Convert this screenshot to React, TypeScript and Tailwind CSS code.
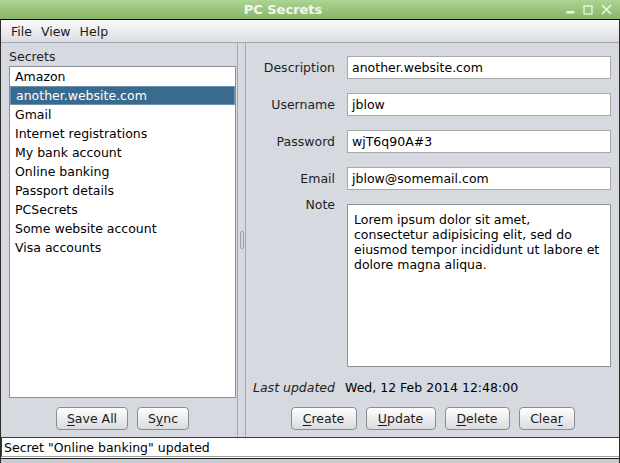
import React from "react";

const secrets = [
    "Amazon",
    "another.website.com",
    "Gmail",
    "Internet registrations",
    "My bank account",
    "Online banking",
    "Passport details",
    "PCSecrets",
    "Some website account",
    "Visa accounts",
];

const noteLines = [
    "Lorem ipsum dolor sit amet,",
    "consectetur adipisicing elit, sed do",
    "eiusmod tempor incididunt ut labore et",
    "dolore magna aliqua.",
];

// Swing style push button, one letter underlined as the mnemonic
function Btn({ label, mnemonic, width }: { label: string; mnemonic: number; width: string }) {
    return (
        <button
            className={`${width} h-[23px] rounded-[4px] border border-[#8a8d93] bg-linear-to-b from-white to-[#dadbe0] text-[12.5px] leading-[15px] text-[#1a1a1a] flex items-center justify-center`}
        >
            <span>
                {label.slice(0, mnemonic)}
                <span className="underline underline-offset-2">{label[mnemonic]}</span>
                {label.slice(mnemonic + 1)}
            </span>
        </button>
    );
}

function Field({ label, value }: { label: string; value: string }) {
    return (
        <div className="flex items-center h-[23px]">
            <div className="w-[89px] text-right text-[#1e1e1e]">{label}</div>
            <div className="ml-[12px] flex-1 h-[23px] border border-[#a6a8ac] bg-white pl-[4px] flex items-center text-black">
                {value}
            </div>
        </div>
    );
}

export default function App() {
    return (
        <div className="w-[620px] h-[463px] flex flex-col overflow-hidden bg-[#d6d9df] font-['DejaVu_Sans',sans-serif] text-[12.5px] leading-[15px]">
            {/* Title bar */}
            <div className="h-[20px] shrink-0 flex items-center bg-linear-to-b from-[#add493] to-[#88b667] border-b border-black">
                <div className="w-[566px] text-center font-bold text-[13px] text-[#f3f7ef]">PC Secrets</div>
                <div className="flex items-center gap-[8px] text-[#eef5e8]">
                    <svg width="9" height="9" viewBox="0 0 9 9">
                        <rect x="0.5" y="6" width="8" height="2.5" fill="#eef5e8" />
                    </svg>
                    <svg width="10" height="10" viewBox="0 0 10 10">
                        <rect x="1" y="1" width="8" height="8" fill="none" stroke="#eef5e8" strokeWidth="1.3" />
                    </svg>
                    <svg width="11" height="11" viewBox="0 0 11 11">
                        <path d="M1 1 L10 10 M10 1 L1 10" stroke="#eef5e8" strokeWidth="1.6" />
                    </svg>
                </div>
            </div>

            <div className="flex-1 flex flex-col border-x border-[#2a2a2a]">
                {/* Menu bar */}
                <div className="h-[23px] shrink-0 flex items-center gap-[9px] pl-[10px] bg-linear-to-b from-[#fbfbfc] to-[#dcdde3] border-b border-[#a4a7ad] text-[#1a1a1a]">
                    <span>File</span>
                    <span>View</span>
                    <span>Help</span>
                </div>

                {/* Body */}
                <div className="flex-1 flex">
                    {/* Secrets list */}
                    <div className="w-[236px] flex flex-col pt-[6px] pl-[8px] pr-[1px]">
                        <div className="h-[15px] text-[#1e1e1e]">Secrets</div>
                        <div className="mt-[2px] flex-1 border border-[#8b8f96] bg-white">
                            {secrets.map((s) => (
                                <div
                                    key={s}
                                    className={
                                        s === "another.website.com"
                                            ? "h-[19px] pl-[5px] flex items-center bg-[#3a6a8e] text-white border border-[#6e92ad]"
                                            : "h-[19px] pl-[5px] flex items-center text-black"
                                    }
                                >
                                    {s}
                                </div>
                            ))}
                        </div>
                        <div className="mt-[9px] mb-[7px] flex justify-center gap-[9px]">
                            <Btn label="Save All" mnemonic={0} width="w-[72px]" />
                            <Btn label="Sync" mnemonic={1} width="w-[52px]" />
                        </div>
                    </div>

                    {/* Splitter */}
                    <div className="w-[9px] flex items-center justify-center border-x border-[#a3a6ac]">
                        <div className="w-[4px] h-[18px] rounded-[2px] border border-[#9a9da3]" />
                    </div>

                    {/* Detail form */}
                    <div className="flex-1 flex flex-col pt-[13px] pr-[8px]">
                        <Field label="Description" value="another.website.com" />
                        <div className="mt-[14px]">
                            <Field label="Username" value="jblow" />
                        </div>
                        <div className="mt-[14px]">
                            <Field label="Password" value="wjT6q90A#3" />
                        </div>
                        <div className="mt-[14px]">
                            <Field label="Email" value="jblow@somemail.com" />
                        </div>
                        <div className="mt-[14px] flex-1 flex">
                            <div className="w-[89px] text-right text-[#1e1e1e] mt-[-7px]">Note</div>
                            <div className="ml-[12px] flex-1 border border-[#8f9298] bg-white pt-[7px] pl-[6px] text-black">
                                {noteLines.map((l) => (
                                    <div key={l}>{l}</div>
                                ))}
                            </div>
                        </div>
                        <div className="mt-[13px] h-[15px] flex">
                            <div className="w-[89px] text-right italic text-[#1e1e1e]">Last updated</div>
                            <div className="ml-[10px] text-black">Wed, 12 Feb 2014 12:48:00</div>
                        </div>
                        <div className="mt-[12px] mb-[7px] flex justify-center gap-[9px] pl-[8px]">
                            <Btn label="Create" mnemonic={0} width="w-[66px]" />
                            <Btn label="Update" mnemonic={0} width="w-[70px]" />
                            <Btn label="Delete" mnemonic={0} width="w-[65px]" />
                            <Btn label="Clear" mnemonic={4} width="w-[56px]" />
                        </div>
                    </div>
                </div>

                {/* Status bar */}
                <div className="h-[20px] shrink-0 flex items-center bg-white border-t border-l border-[#3c3c3c] border-b-[#a0a0a0] border-b pl-[2px] text-black">
                    Secret "Online banking" updated
                </div>
                <div className="h-[1px] shrink-0 bg-white" />
                <div className="h-[1px] shrink-0 bg-[#1a1a1a]" />
                <div className="h-[4px] shrink-0 bg-[#c9ccd1]" />
            </div>
        </div>
    );
}
